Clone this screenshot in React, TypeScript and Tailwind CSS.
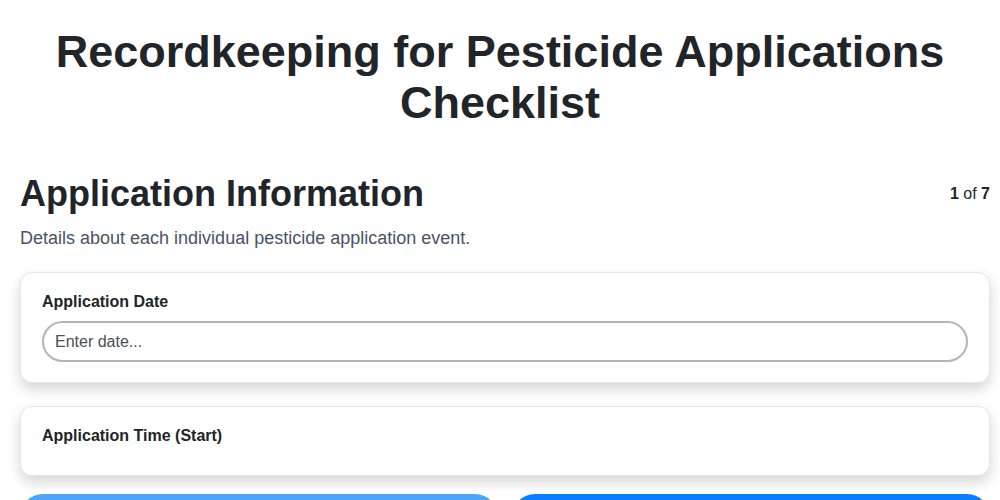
import React from "react";

const font = { fontFamily: '"Liberation Sans", Arial, Helvetica, sans-serif' };

function FieldCard({ label, children }: { label: string; children?: React.ReactNode }) {
  return (
    <div className="rounded-xl border border-[#e6e7eb] bg-white px-[21px] pt-[19px] pb-[20px] shadow-[0_6px_14px_rgba(0,0,0,0.17)]">
      <label className="block text-[16px] font-bold leading-5 text-[#212529]">{label}</label>
      {children}
    </div>
  );
}

export default function App() {
  return (
    <div className="min-h-[500px] bg-white text-[#212529]" style={font}>
      <h1 className="pt-[26px] text-center text-[45px] font-bold leading-[51px] text-[#212529]">
        Recordkeeping for Pesticide Applications
        <br />
        Checklist
      </h1>

      <div className="pl-5 pr-[10px] pt-[42px]">
        <div className="flex items-start justify-between">
          <h2 className="text-[36px] font-bold leading-[48px]">Application Information</h2>
          <div className="pt-[14px] text-[16px] leading-5">
            <span className="font-bold">1</span> of <span className="font-bold">7</span>
          </div>
        </div>
        <p className="mt-[9px] text-[18px] leading-[22px] text-[#495366]">
          Details about each individual pesticide application event.
        </p>

        <div className="mt-[23px] flex flex-col gap-[23px]">
          <FieldCard label="Application Date">
            <input
              type="text"
              placeholder="Enter date..."
              className="mt-[9px] block h-[41px] w-full rounded-full border-2 border-[#aeb5bd] bg-white px-[11px] text-[16px] text-[#212529] placeholder:text-[#495057] outline-none"
            />
          </FieldCard>
          <FieldCard label="Application Time (Start)">
            <div className="h-[9px]" />
          </FieldCard>
        </div>

        <div className="mt-[18px] flex gap-[14px] pb-5">
          <button className="h-[46px] flex-1 rounded-full bg-[#4da3f8] text-[16px] font-bold text-white">
            Previous
          </button>
          <button className="h-[46px] flex-1 rounded-full bg-[#0a7cff] text-[16px] font-bold text-white">
            Next
          </button>
        </div>
      </div>
    </div>
  );
}
